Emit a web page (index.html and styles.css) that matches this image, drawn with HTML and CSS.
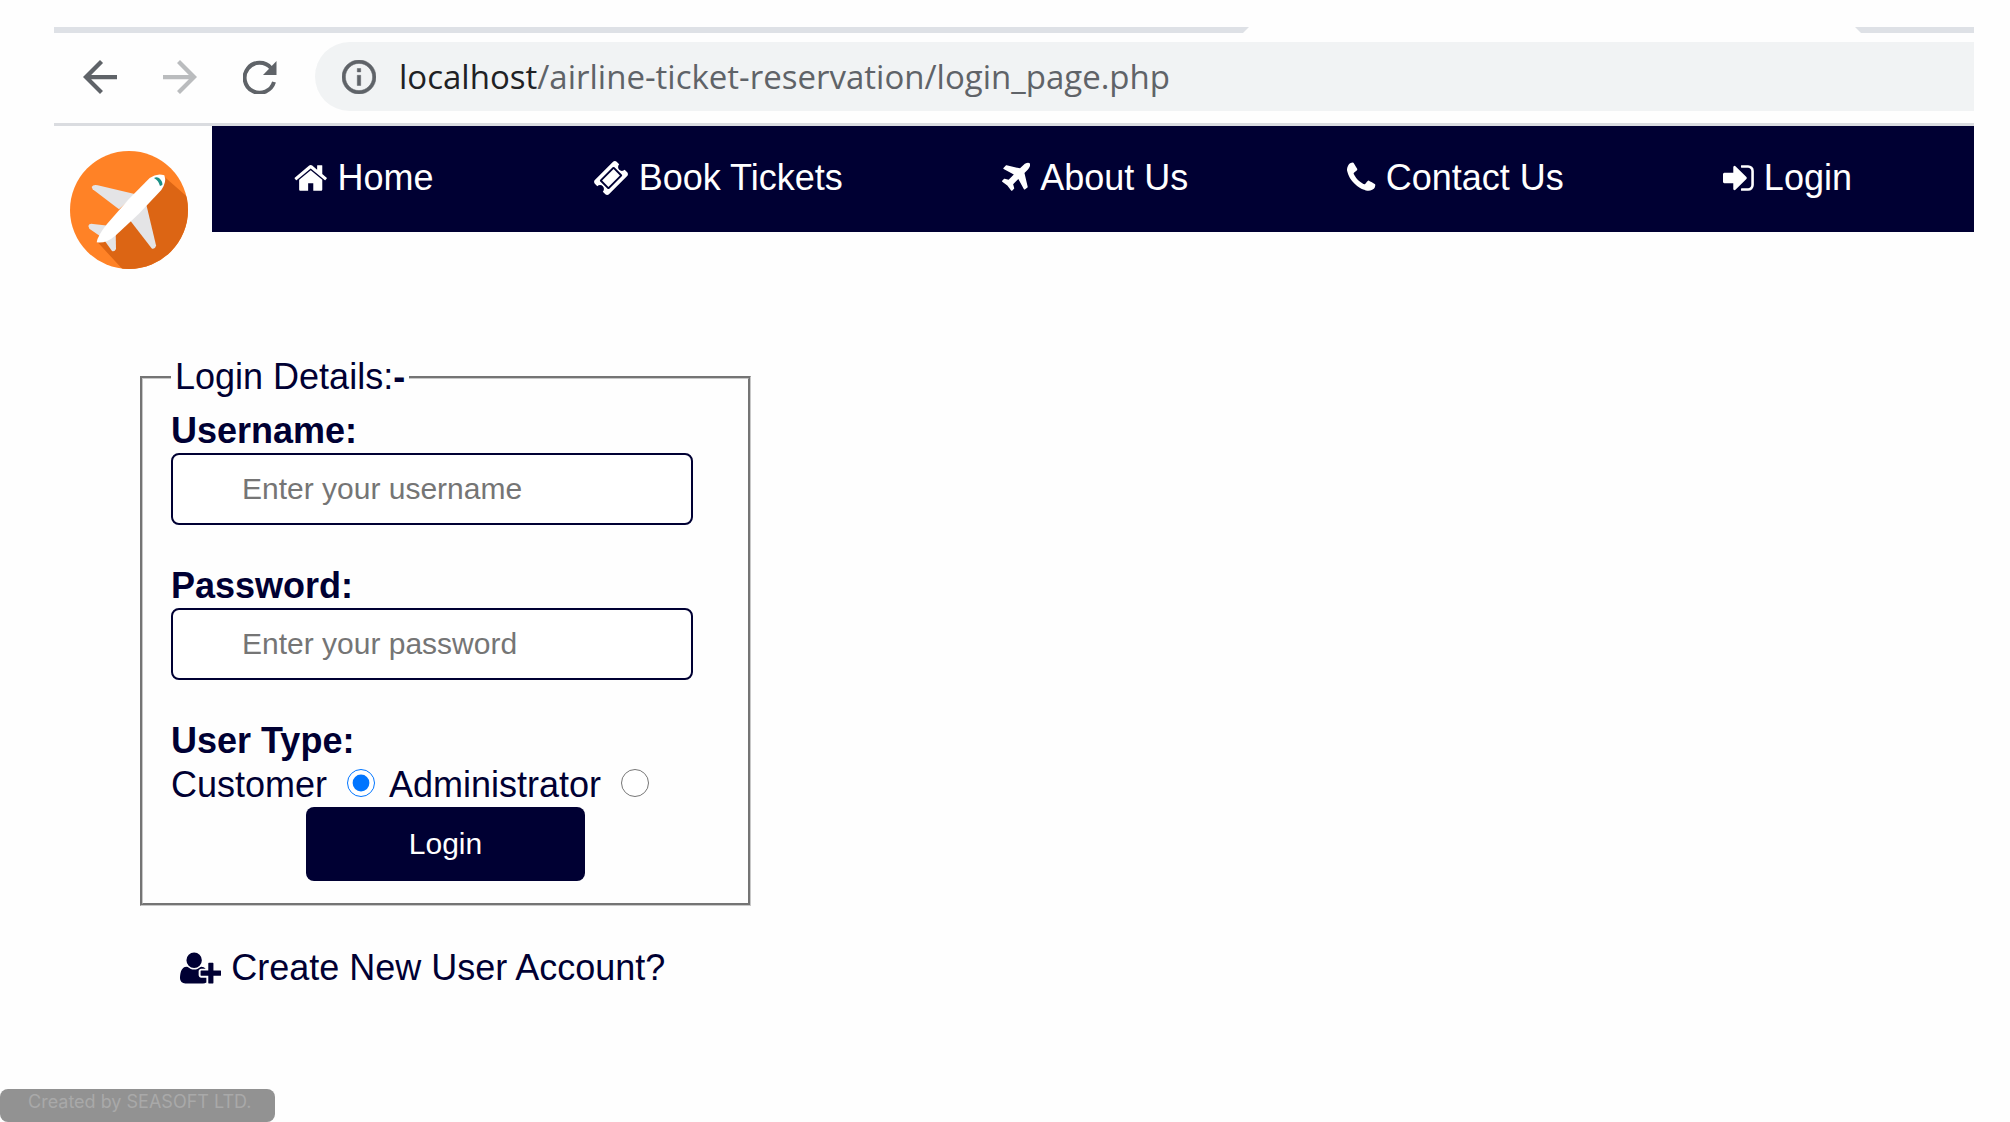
FILE: index.html
```html
<!DOCTYPE html>
<html lang="en">
<head>
  <meta charset="UTF-8" />
  <meta name="viewport" content="width=device-width, initial-scale=1.0" />
  <title>Login</title>
  <link rel="stylesheet" href="styles.css">
</head>
<body>
  <div class="browser">
    <div class="tab-strip">
      <div class="strip-left"></div>
      <div class="active-tab"></div>
      <div class="strip-right"></div>
    </div>

    <div class="toolbar">
      <button type="button" class="tool-btn" aria-label="Back">
        <svg viewBox="4 4 16 16"><path d="M20 11H7.83l5.59-5.59L12 4l-8 8 8 8 1.41-1.41L7.83 13H20v-2z"/></svg>
      </button>
      <button type="button" class="tool-btn faded" aria-label="Forward">
        <svg viewBox="4 4 16 16"><path d="M12 4l-1.41 1.41L16.17 11H4v2h12.17l-5.58 5.59L12 20l8-8z"/></svg>
      </button>
      <button type="button" class="tool-btn" aria-label="Reload">
        <svg viewBox="0 0 34 34"><path fill="none" stroke="currentColor" stroke-width="4" d="M28 8A15 15 0 1 0 31 22"/><path d="M33.500 1V15H20z"/></svg>
      </button>
      <div class="address-bar">
        <svg viewBox="2 2 20 20"><path d="M11 7h2v2h-2zm0 4h2v6h-2zm1-9C6.48 2 2 6.48 2 12s4.48 10 10 10 10-4.48 10-10S17.52 2 12 2zm0 18c-4.410 0-8-3.590-8-8s3.590-8 8-8 8 3.590 8 8-3.590 8-8 8z" stroke="currentColor" stroke-width=".3"/></svg>
        <span class="url"><span class="host">localhost</span>/airline-ticket-reservation/login_page.php</span>
      </div>
    </div>

    <header>
      <svg class="logo" viewBox="29 31 354 354" role="img" aria-label="Airline logo">
        <clipPath id="disc"><circle cx="206" cy="208" r="177"/></clipPath>
        <circle cx="206" cy="208" r="177" fill="#ff8226"/>
        <path clip-path="url(#disc)" fill="#dc6514" d="M312 108L400 185V400H200L112 305L250 190z"/>
        <path fill="#e4e4e6" d="M94 139Q98 131 112 134L226 161L176 206L97 146z"/>
        <path fill="#e4e4e6" d="M257 188L287 314Q286 325 275 324L210 240z"/>
        <path fill="#e4e4e6" d="M84 256Q86 248 98 250L152 256L122 288L87 264z"/>
        <path fill="#e4e4e6" d="M166 272L167 325Q163 334 155 331L132 299z"/>
        <path fill="#fff" d="M109 305Q112 285 140 250L205 176L268 112Q290 96 312 104Q320 124 303 148L235 220L165 285Q135 310 109 305z"/>
        <path fill="#1b9187" d="M281 112Q288 108 296 112Q308 122 306 133L299 136Q295 120 281 112z"/>
      </svg>
      <nav>
        <a href="#home"><svg viewBox="64 0 1664 1792"><path d="M1472 992v480q0 26-19 45t-45 19h-384v-384h-256v384h-384q-26 0-45-19t-19-45v-480q0-1 .5-3t.5-3l575-474 575 474q1 2 1 6zm223-69l-62 74q-8 9-21 11h-3q-13 0-21-7l-692-577-692 577q-12 8-24 7-13-2-21-11l-62-74q-8-10-7-23.5t11-21.5l719-599q32-26 76-26t76 26l244 204v-195q0-14 9-23t23-9h192q14 0 23 9t9 23v408l219 182q10 8 11 21.5t-7 23.5z"/></svg>Home</a>
        <a href="#book"><svg viewBox="0 0 1792 1792"><path d="M1024 452l316 316-572 572-316-316zm-211 979l618-618q19-19 19-45t-19-45l-362-362q-18-18-45-18t-45 18l-618 618q-19 19-19 45t19 45l362 362q18 18 45 18t45-18zm889-637l-907 908q-37 37-90.5 37t-90.5-37l-126-126q56-56 56-136t-56-136-136-56-136 56l-125-126q-37-37-37-90.5t37-90.5l907-906q37-37 90.5-37t90.5 37l125 125q-56 56-56 136t56 136 136 56 136-56l126 125q37 37 37 90.5t-37 90.5z"/></svg>Book Tickets</a>
        <a href="#about"><svg viewBox="192 0 1408 1792"><path d="M1568 160q44 52 12 148t-108 172l-161 161 160 696q5 19-12 33l-128 96q-7 6-19 6-4 0-7-1-15-3-21-16l-279-508-259 259 53 194q5 17-8 31l-96 96q-9 9-23 9h-2q-15-2-24-13l-189-252-252-189q-11-7-13-23-1-13 9-25l96-97q9-9 23-9 6 0 8 1l194 53 259-259-508-279q-14-8-17-24-2-16 9-27l128-128q14-13 30-8l665 159 160-160q76-76 172-108t148 12z"/></svg>About Us</a>
        <a href="#contact"><svg viewBox="192 0 1408 1792"><path d="M1600 1240q0 27-10 70.5t-21 68.5q-21 50-122 106-94 51-186 51-27 0-52.5-3.5t-57.5-12.5-47.5-14.5-55.5-20.5-49-18q-98-35-175-83-128-79-264.5-215.5t-215.5-264.5q-48-77-83-175-3-9-18-49t-20.5-55.5-14.5-47.5-12.5-57.5-3.5-52.5q0-92 51-186 56-101 106-122 25-11 68.5-21t70.5-10q14 0 21 3 18 6 53 76 11 19 30 54t35 63.5 31 53.5q3 4 17.5 25t21.5 35.5 7 28.5q0 20-28.5 50t-62 55-62 53-28.5 46q0 9 5 22.5t8.5 20.5 14 24 11.5 19q76 137 174 235t235 174q2 1 19 11.5t24 14 20.5 8.5 22.5 5q18 0 46-28.5t53-62 55-62 50-28.5q14 0 28.5 7t35.5 21.5 25 17.5q25 15 53.5 31t63.5 35 54 30q70 35 76 53 3 7 3 21z"/></svg>Contact Us</a>
        <a href="#login"><svg viewBox="128 0 1536 1792"><path d="M1312 896q0 26-19 45l-544 544q-19 19-45 19t-45-19-19-45v-288h-448q-26 0-45-19t-19-45v-384q0-26 19-45t45-19h448v-288q0-26 19-45t45-19 45 19l544 544q19 19 19 45zm352-352v704q0 119-84.5 203.5t-203.5 84.5h-320q-13 0-22.5-9.5t-9.5-22.5q0-4-1-20t-.5-26.5 3-23.5 10-19.5 20.5-6.5h320q66 0 113-47t47-113v-704q0-66-47-113t-113-47h-312l-11.5-1-11.5-3-8-5.5-7-9-2-13.5q0-4-1-20t-.5-26.5 3-23.5 10-19.5 20.5-6.5h320q119 0 203.5 84.5t84.5 203.5z"/></svg>Login</a>
      </nav>
    </header>

    <main>
      <form id="login">
        <fieldset>
          <legend>Login Details:<b>-</b></legend>

          <label class="field-label" for="username">Username:</label>
          <input class="text-input" type="text" id="username" name="username" placeholder="Enter your username" />

          <label class="field-label" for="password">Password:</label>
          <input class="text-input" type="password" id="password" name="password" placeholder="Enter your password" />

          <div class="field-label">User Type:</div>
          <div class="user-type">
            <label for="customer">Customer</label>
            <input type="radio" id="customer" name="user_type" value="customer" checked />
            <label for="administrator">Administrator</label>
            <input type="radio" id="administrator" name="user_type" value="administrator" />
          </div>

          <button type="submit" class="login-btn">Login</button>
        </fieldset>
      </form>

      <a class="create-account" href="#new-user"><svg viewBox="0 0 2048 1792"><path d="M704 896q-159 0-271.5-112.5t-112.5-271.5 112.5-271.5 271.5-112.5 271.5 112.5 112.5 271.5-112.5 271.5-271.5 112.5zm960 128h352q13 0 22.5 9.5t9.5 22.5v192q0 13-9.5 22.5t-22.5 9.5h-352v352q0 13-9.5 22.5t-22.5 9.5h-192q-13 0-22.5-9.5t-9.5-22.5v-352h-352q-13 0-22.5-9.5t-9.5-22.5v-192q0-13 9.5-22.5t22.5-9.5h352v-352q0-13 9.5-22.5t22.5-9.5h192q13 0 22.5 9.5t9.5 22.5v352zm-736 224q0 52 38 90t90 38h256v238q-68 50-171 50h-874q-121 0-194-69t-73-190q0-53 3.5-103.5t14-109 26.5-108.5 43-97.5 62-81 85.5-53.5 111.5-20q19 0 39 17 79 61 154.5 91.5t164.5 30.5 164.5-30.5 154.5-91.5q20-17 39-17 132 0 217 96h-223q-52 0-90 38t-38 90v192z"/></svg>Create New User Account?</a>
    </main>
  </div>

  <div class="credit">Created by SEASOFT LTD.</div>
</body>
</html>
```

FILE: styles.css
```css
:root {
  --navy: #000033;
  --strip: #dee1e6;
  --grey: #5f6368;
}

* {
  box-sizing: border-box;
}

body {
  margin: 0;
  font-family: "Liberation Sans", Arial, sans-serif;
  font-size: 36px;
  line-height: 44px;
  color: var(--navy);
  background: #fefefe;
}

svg {
  display: block;
  flex: none;
  fill: currentColor;
}

a {
  color: inherit;
  text-decoration: none;
}

.browser {
  padding: 27px 36px 0 54px;
}

/* Browser bar */
.tab-strip {
  display: flex;
  height: 6px;
}

.strip-left {
  flex: 1195;
  background: var(--strip);
  clip-path: polygon(0 0, 100% 0, calc(100% - 6px) 100%, 0 100%);
}

.active-tab {
  flex: 606;
}

.strip-right {
  flex: 119;
  background: var(--strip);
  clip-path: polygon(0 0, 100% 0, 100% 100%, 6px 100%);
}

.toolbar {
  display: flex;
  align-items: center;
  gap: 46px;
  padding: 9px 0 12px 29px;
  border-bottom: 3px solid #dadce0;
  color: var(--grey);
}

.toolbar svg {
  width: 34px;
  height: 34px;
}

.tool-btn {
  padding: 0;
  border: none;
  background: none;
  color: inherit;
}

.faded {
  color: #babcbe;
}

.address-bar {
  flex: 1;
  display: flex;
  align-items: center;
  gap: 23px;
  height: 69px;
  margin-left: -8px;
  padding-left: 27px;
  border-radius: 35px 0 0 35px;
  background: #f1f3f4;
}

.url {
  font-family: "Open Sans", "Segoe UI", sans-serif;
  font-size: 33px;
}

.host {
  color: #202124;
}

/* Header */
header {
  display: flex;
  align-items: flex-start;
}

.logo {
  width: 118px;
  height: 118px;
  margin: 25px 24px 0 16px;
}

nav {
  flex: 1;
  display: flex;
  justify-content: space-between;
  padding: 30px 122px 32px 82px;
  background: var(--navy);
  color: #fff;
}

nav a,
.create-account {
  display: flex;
  align-items: center;
  gap: 10px;
}

nav svg,
.create-account svg {
  height: 36px;
}

/* Login form */
main {
  padding: 86px 86px 0;
}

fieldset {
  max-width: 611px;
  margin: 0;
  padding: 10px 28px 22px;
  border: 3px groove #c8c8c8;
}

legend {
  padding: 0 4px;
}

.field-label {
  display: block;
  font-weight: bold;
}

.text-input {
  display: block;
  width: 95%;
  height: 72px;
  margin-bottom: 39px;
  padding: 0 69px;
  border: 2px solid var(--navy);
  border-radius: 8px;
  background: #fff;
  color: var(--navy);
  font-family: inherit;
  font-size: 30px;
}

.text-input::placeholder {
  color: #757575;
}

.user-type {
  display: flex;
  align-items: baseline;
}

.user-type input {
  width: 28px;
  height: 28px;
  margin: 0 14px 0 20px;
  accent-color: #0075ff;
}

.login-btn {
  display: block;
  width: 51%;
  height: 74px;
  margin: 0 auto;
  border: none;
  border-radius: 8px;
  background: var(--navy);
  color: #fff;
  font-family: inherit;
  font-size: 30px;
}

.create-account {
  margin: 40px 0 0 40px;
}

.credit {
  position: absolute;
  left: 0;
  bottom: 0;
  padding: 0 24px 8px 28px;
  border-radius: 8px;
  background: #929292;
  color: #a9a9a9;
  font-family: Inter, sans-serif;
  font-size: 18px;
  line-height: 25px;
}
```
